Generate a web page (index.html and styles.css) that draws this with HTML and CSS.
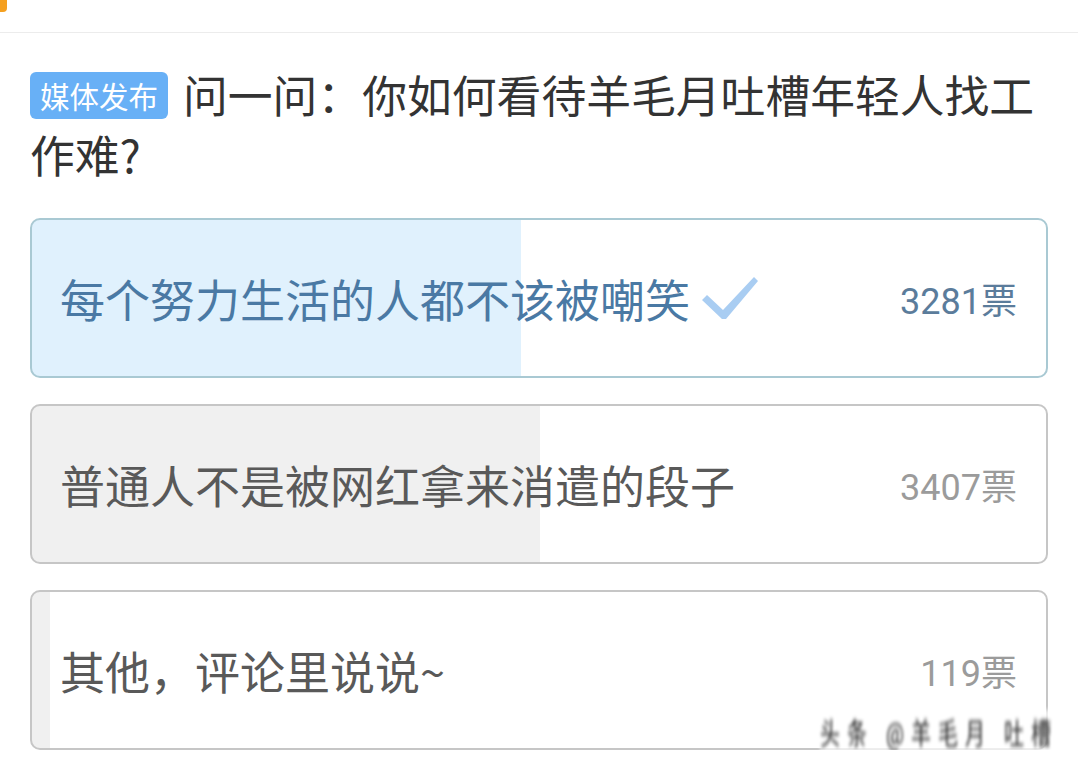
FILE: index.html
```html
<!DOCTYPE html>
<html lang="zh-CN">
<head>
    <meta charset="UTF-8">
    <meta name="viewport" content="width=device-width, initial-scale=1.0">
    <title>问一问</title>
    <link rel="stylesheet" href="styles.css">
</head>
<body>

<div class="topbar">
    <div class="corner-mark"></div>
</div>

<div class="container">

    <h1 class="question">
        <span class="badge">媒体发布</span>问一问：你如何看待羊毛月吐槽年轻人找工作难?
    </h1>

    <div class="poll">
        <!-- 总票数 6807，宽度按票数比例 -->
        <div class="option option-voted" style="--pct: 48.2%;">
            <span class="option-text">每个努力生活的人都不该被嘲笑</span>
            <svg class="check" width="56" height="46" viewBox="0 0 56 46">
                <polygon points="0,24 5,19 21,34 52,1 56,5 24,43 20,43" fill="#a9cdf2"/>
            </svg>
            <span class="option-count">3281票</span>
        </div>

        <div class="option" style="--pct: 50.05%;">
            <span class="option-text">普通人不是被网红拿来消遣的段子</span>
            <span class="option-count">3407票</span>
        </div>

        <div class="option" style="--pct: 1.75%;">
            <span class="option-text">其他，评论里说说~</span>
            <span class="option-count">119票</span>
        </div>

        <div class="watermark">头条 @羊毛月 吐槽</div>
    </div>

</div>

</body>
</html>
```

FILE: styles.css
```css
body {
    font-family: Roboto, "Noto Sans CJK SC", sans-serif;
    margin: 0;
    background-color: #fff;
    color: #333;
}

.topbar {
    height: 32px;
    border-bottom: 1px solid #ececec;
}

.corner-mark {
    width: 7px;
    height: 12px;
    background-color: #f5a020;
    border-bottom-right-radius: 4px;
}

.container {
    padding: 0 30px;
}

.question {
    font-family: "Noto Sans CJK SC", sans-serif;
    font-size: 44.8px;
    font-weight: normal;
    line-height: 60px;
    color: #333;
    margin: 31px 0 34px;
}

.badge {
    display: inline-block;
    font-size: 29.5px;
    line-height: 47px;
    padding: 0 10px;
    margin-right: 15px;
    color: #fff;
    background-color: #68b0f6;
    border-radius: 6px;
    vertical-align: 5px;
}

.poll {
    position: relative;
    display: flex;
    flex-direction: column;
    gap: 26px;
}

.option {
    --fill: #f0f0f0;
    box-sizing: border-box;
    height: 160px;
    display: flex;
    align-items: center;
    padding: 0 29px 0 28px;
    border: 2px solid #c6c6c6;
    border-radius: 10px;
    background: linear-gradient(to right, var(--fill) var(--pct), #fff var(--pct));
}

.option-text {
    font-family: "Noto Sans CJK SC", sans-serif;
    font-size: 45px;
    color: #595959;
}

.option-count {
    margin-left: auto;
    font-size: 36px;
    color: #9b9b9b;
}

.option-voted {
    --fill: #e0f1fd;
    border-color: #a9c9d3;
}

.option-voted .option-text {
    color: #4a79a4;
}

.option-voted .option-count {
    color: #5b7c9b;
}

.check {
    margin-left: 12px;
    margin-top: 2px;
}

.watermark {
    position: absolute;
    right: -10px;
    bottom: 4px;
    font-size: 20px;
    letter-spacing: 7px;
    color: #222;
    transform: scaleY(1.5);
    filter: blur(1.4px);
    background-color: rgba(255, 255, 255, 0.7);
}
```
